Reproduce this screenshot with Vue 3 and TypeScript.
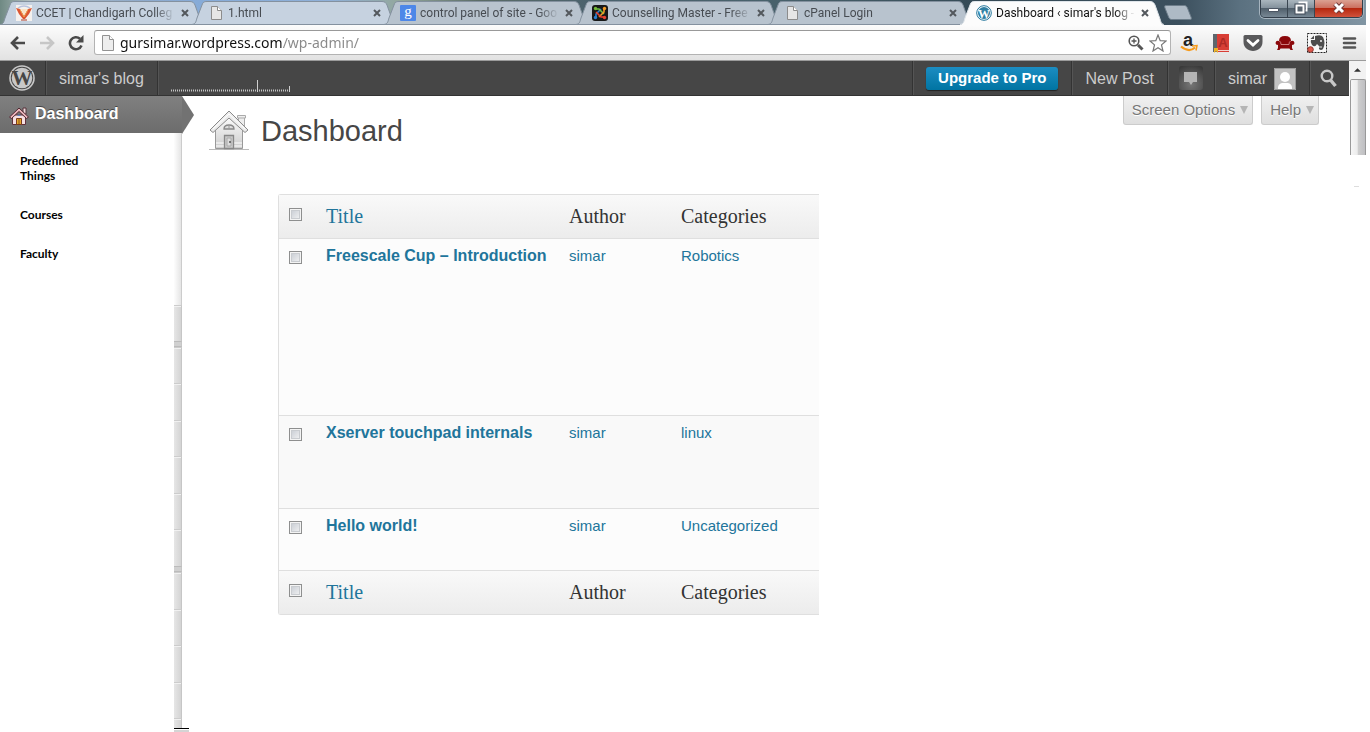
<script setup lang="ts">
import { ref } from 'vue'

interface Tab { title: string; icon: string; active?: boolean; tone?: string }
interface Post { title: string; author: string; category: string; size: string }

const tabs: Tab[] = [
  { title: 'CCET | Chandigarh Colleg', icon: 'ccet', tone: 'light' },
  { title: '1.html', icon: 'page', tone: 'light' },
  { title: 'control panel of site - Goo', icon: 'google' },
  { title: 'Counselling Master - Free', icon: 'joomla' },
  { title: 'cPanel Login', icon: 'page' },
  { title: "Dashboard ‹ simar's blog -", icon: 'wp', active: true },
]

const posts: Post[] = [
  { title: 'Freescale Cup – Introduction', author: 'simar', category: 'Robotics', size: 'tall' },
  { title: 'Xserver touchpad internals', author: 'simar', category: 'linux', size: 'medium' },
  { title: 'Hello world!', author: 'simar', category: 'Uncategorized', size: 'short' },
]

const menu: string[] = ['Predefined Things', 'Courses', 'Faculty']
const rail: string[] = ['item', 'gap', 'item', 'item', 'item', 'item', 'item', 'item', 'gap', 'item', 'item', 'item', 'item', 'rest']
const address = ref('gursimar.wordpress.com/wp-admin/')
</script>

<template>
  <div class="browser">
    <header class="strip">
      <ul class="tabs">
        <li v-for="(tab, i) in tabs" :key="i" class="tab" :class="[{ active: tab.active }, tab.tone]">
          <svg class="shape" viewBox="0 0 204 25" preserveAspectRatio="none" aria-hidden="true">
            <path class="fill" d="M0 25C4 24 4 21 5 18L10 5C11 2 12 1.500 15 1.500H190C193 1.500 194 3 195 5L200 19C201 23 202 24 204 25Z" />
            <path class="edge" d="M0 24.500C4 24 4 21 5 18L10 5C11 2 12 1.500 15 1.500H190C193 1.500 194 3 195 5L200 19C201 23 202 24 204 24.500" />
            <path v-if="!tab.active" class="edge" d="M1 24.500H203" />
          </svg>
          <svg class="favicon" viewBox="0 0 16 16" aria-hidden="true">
            <template v-if="tab.icon === 'ccet'">
              <path d="M0 0H16V16H0Z" fill="#f4f1ee" />
              <path d="M2 3Q8-1 14 3" fill="none" stroke="#b9c3de" stroke-width="1.500" />
              <path d="M0 3L4 4 8 11 12 4 16 3 13 9 9 14H7L3 9Z" fill="#dc5632" />
              <path d="M5 4H11L8 10Z" fill="#fbe3c4" />
              <path d="M4 4.500L8 12L12 4.500" fill="none" stroke="#f0a04a" />
              <path d="M5 15H11" stroke="#a33b2d" />
            </template>
            <template v-else-if="tab.icon === 'page'">
              <path d="M3.500 1.500H9.500L13.500 5.500V14.500H3.500Z" fill="#e6e6e6" stroke="#8c8c8c" />
              <path d="M9.500 1.500V5.500H13.500" fill="#fff" stroke="#8c8c8c" />
            </template>
            <template v-else-if="tab.icon === 'google'">
              <rect width="16" height="16" rx="1" fill="#4d87e8" />
              <text x="8" y="11" text-anchor="middle" class="g-mark">g</text>
            </template>
            <template v-else-if="tab.icon === 'joomla'">
              <rect width="16" height="16" rx="3" fill="#181818" />
              <path d="M4 12V9L9 4" stroke="#2c7fd0" stroke-width="1.600" fill="none" />
              <path d="M4 4H7L12 9" stroke="#6fbf44" stroke-width="1.600" fill="none" />
              <path d="M12 4V7L7 12" stroke="#f29b26" stroke-width="1.600" fill="none" />
              <path d="M12 12H9L4 7" stroke="#e64331" stroke-width="1.600" fill="none" />
              <circle cx="3.500" cy="3.500" r="1.700" fill="#72b837" /><circle cx="12.500" cy="3.500" r="1.700" fill="#f29b26" />
              <circle cx="3.500" cy="12.500" r="1.700" fill="#2c7fd0" /><circle cx="12.500" cy="12.500" r="1.700" fill="#e64331" />
            </template>
            <template v-else>
              <circle cx="8" cy="8" r="7.300" fill="#fff" stroke="#21759b" />
              <circle cx="8" cy="8" r="6" fill="#2f7fa3" />
              <text x="8" y="12.500" text-anchor="middle" class="w-small">W</text>
            </template>
          </svg>
          <button class="tab-title" type="button">{{ tab.title }}</button>
          <button class="tab-close" type="button" aria-label="Close tab">
            <svg viewBox="0 0 8 8"><path d="M1 1L7 7M7 1L1 7" /></svg>
          </button>
        </li>
      </ul>
      <button class="new-tab" type="button" aria-label="New tab">
        <svg viewBox="0 0 32 16"><path d="M3 .5H23Q25 .5 26 3L30 13Q31 15.500 29 15.500H9Q7 15.500 6 13L2 3Q1 .5 3 .5Z" /></svg>
      </button>
      <div class="window-controls">
        <button type="button" aria-label="Minimize"><svg viewBox="0 0 16 14"><path d="M2.500 7.500H12.500V10.500H2.500Z" fill="#fff" stroke="#4b5563" /></svg></button>
        <button type="button" aria-label="Restore">
          <svg viewBox="0 0 16 14"><path d="M5.500 1.500H13.500V9.500H11" fill="none" stroke="#fff" stroke-width="2" /><path d="M3.500 4.500H10.500V11.500H3.500Z" fill="none" stroke="#3e4856" stroke-width="4" /><path d="M3.500 4.500H10.500V11.500H3.500Z" fill="#58646f" stroke="#fff" stroke-width="2" /></svg>
        </button>
        <button type="button" class="shut" aria-label="Close window">
          <svg viewBox="0 0 16 14"><path d="M4 3L12 11M12 3L4 11" stroke="#713a38" stroke-width="5" /><path d="M4 3L12 11M12 3L4 11" stroke="#fff" stroke-width="3" /></svg>
        </button>
      </div>
    </header>

    <div class="toolbar">
      <button class="tool" type="button" aria-label="Back"><svg viewBox="0 0 16 16"><path d="M15 8H3M8 2L2 8L8 14" fill="none" stroke="#4a4a4a" stroke-width="2.600" /></svg></button>
      <button class="tool" type="button" aria-label="Forward"><svg viewBox="0 0 16 16"><path d="M1 8H13M8 2L14 8L8 14" fill="none" stroke="#c6c6c6" stroke-width="2.600" /></svg></button>
      <button class="tool reload" type="button" aria-label="Reload"><svg viewBox="0 0 16 16"><path d="M13.500 10.500A6 6 0 1 1 12 3.800" fill="none" stroke="#4a4a4a" stroke-width="2.600" /><path d="M15.500 0V7.500H8Z" fill="#4a4a4a" /></svg></button>
      <div class="omnibox">
        <svg class="page-icon" viewBox="0 0 16 16" aria-hidden="true"><path d="M2.500 .5H9.500L13.500 4.500V15.500H2.500Z" fill="#eee" stroke="#929292" /><path d="M9.500 .5V4.500H13.500" fill="#fff" stroke="#929292" /></svg>
        <input v-model="address" type="text" aria-label="Address" spellcheck="false" />
        <button class="inner-tool" type="button" aria-label="Zoom"><svg viewBox="0 0 16 16"><circle cx="6" cy="6" r="4.800" fill="none" stroke="#555" stroke-width="1.600" /><path d="M3.500 6H8.500M6 3.500V8.500" stroke="#555" stroke-width="1.300" /><path d="M10 10L14.500 14.500" stroke="#555" stroke-width="3" /></svg></button>
        <button class="inner-tool star" type="button" aria-label="Bookmark"><svg viewBox="0 0 18 18"><path d="M9 1L11.200 6.600 17 7 12.500 10.900 14 17 9 13.700 4 17 5.500 10.900 1 7 6.800 6.600Z" fill="#fff" stroke="#777" stroke-width="1.200" /></svg></button>
      </div>
      <div class="extensions">
        <button type="button" aria-label="Amazon"><svg viewBox="0 0 20 20"><text x="9" y="13" text-anchor="middle" class="a-mark">a</text><path d="M2 13.500Q10 20 16 14.500" fill="none" stroke="#f79b1c" stroke-width="2.200" /><path d="M13 13L18 12.500L17 17.500" fill="none" stroke="#f79b1c" stroke-width="1.500" /></svg></button>
        <button type="button" aria-label="Dictionary"><svg viewBox="0 0 20 20"><path d="M2 1H18V19H2Z" fill="#d83e36" /><path d="M2 1H6V19H2Z" fill="#5d666c" /><path d="M6 17.500H18" stroke="#f3d6d2" /><path d="M3 15H7V20L5 18L3 20Z" fill="#efb326" /><text x="12" y="14" text-anchor="middle" class="d-mark">A</text></svg></button>
        <button type="button" aria-label="Pocket"><svg viewBox="0 0 20 20"><path d="M2 2H18Q19.500 2 19.500 3.500V9C19.500 14.500 15 18 10 18S.5 14.500 .5 9V3.500Q.5 2 2 2Z" fill="#59595b" /><path d="M5 7.500L10 12L15 7.500" fill="none" stroke="#fff" stroke-width="2.800" stroke-linecap="round" /></svg></button>
        <button type="button" aria-label="Sofa"><svg viewBox="0 0 20 20"><path d="M4 8Q4 3 10 3T16 8Q19 7 19.500 10Q19.500 12 17 12V15L18 17H15.500L14.500 15.500H5.500L4.500 17H2L3 15V12Q.5 12 .5 10Q1 7 4 8Z" fill="#8b080b" /><path d="M4.500 8Q6 9 6 11.500H14Q14 9 15.500 8" fill="none" stroke="#d99" stroke-width=".8" /></svg></button>
        <button type="button" aria-label="Evernote clipper"><svg viewBox="0 0 20 20"><path d="M.5 .5H19.500V19.500H.5Z" fill="#f8f8f8" stroke="#222" stroke-dasharray="2 1" /><path d="M4 7H8V3Q14 1 16 4Q19 10 16 16Q14 18 12 16V13L10 11Q8 15 5 12Q3 9 4 7Z" fill="#4d4d4d" /><path d="M3.500 6L7 2.500V6Z" fill="#4d4d4d" /><circle cx="14" cy="8" r="1" fill="#eee" /><path d="M12 14H15" stroke="#eee" /><circle cx="3.500" cy="16.500" r="2.800" fill="#e0574b" stroke="#8d3932" /></svg></button>
        <button type="button" aria-label="Menu"><svg viewBox="0 0 20 20"><path d="M5 5.500H16M5 10H16M5 14.500H16" stroke="#555" stroke-width="2.600" stroke-linecap="round" /></svg></button>
      </div>
    </div>

    <div class="viewport">
      <div class="page">
        <nav class="adminbar">
          <a href="#" class="bar-item logo" aria-label="WordPress">
            <svg viewBox="0 0 26 26"><circle cx="13" cy="13" r="12" fill="none" stroke="#c8c8c8" stroke-width="1.600" /><circle cx="13" cy="13" r="10.300" fill="#c8c8c8" /><text x="13" y="20" text-anchor="middle" class="w-large">W</text></svg>
          </a>
          <a href="#" class="bar-item">simar's blog</a>
          <a href="#" class="stats" aria-label="Site stats">
            <svg viewBox="0 0 120 12"><path d="M0 10.500H120" stroke="#c4c4c4" stroke-width="2" stroke-dasharray="1 1" /><path d="M86.500 0V12M118.500 6V12" stroke="#d0d0d0" /></svg>
          </a>
          <div class="bar-item upgrade-box"><a href="#" class="upgrade">Upgrade to Pro</a></div>
          <a href="#" class="bar-item">New Post</a>
          <a href="#" class="bar-item notes" aria-label="Notifications">
            <svg viewBox="0 0 24 24"><path d="M5 6H18V16H14L12 19L10 16H5Z" fill="#b5b5b5" /></svg>
          </a>
          <a href="#" class="bar-item user">simar
            <svg viewBox="0 0 22 22" aria-hidden="true"><path d="M0 0H22V22H0Z" fill="#c3c3c3" /><path d="M.5 .5H21.500V21.500H.5Z" fill="none" stroke="#9b9b9b" /><circle cx="11" cy="9" r="5" fill="#fff" /><path d="M4 21Q3.500 16 8 15H14Q18.500 16 18 21Z" fill="#fff" /></svg>
          </a>
          <button class="bar-item search" type="button" aria-label="Search">
            <svg viewBox="0 0 18 20"><circle cx="7" cy="8" r="5.300" fill="none" stroke="#c8c8c8" stroke-width="2.400" /><path d="M10.500 12L15.500 18" stroke="#c8c8c8" stroke-width="3.500" /></svg>
          </button>
        </nav>

        <div class="body">
          <aside class="sidebar">
            <a href="#" class="current">
              <svg class="small-house" viewBox="0 0 20 20" aria-hidden="true"><path d="M14 2H17V8H14Z" fill="#ead9da" stroke="#59333a" /><path d="M3.500 9H16.500V18.500H3.500Z" fill="#f6dfe2" stroke="#61323c" /><path d="M10 2L.5 11L2.500 12.500L10 5.500L17.500 12.500L19.500 11Z" fill="#e8b2b8" stroke="#4f2730" /><path d="M7.500 12.500H12.500V18.500H7.500Z" fill="#e5a82b" stroke="#7a3c1f" /><path d="M10 12.500V18" stroke="#8c531d" /><path d="M8 10Q10 7 12 10Z" fill="#5c82c2" /></svg>
              <span>Dashboard</span>
              <svg class="pointer" viewBox="0 0 12 38" aria-hidden="true"><path d="M0 0L12 19L0 38Z" fill="#727272" /></svg>
            </a>
            <div class="side-columns">
              <ul class="side-menu">
                <li v-for="item in menu" :key="item"><a href="#">{{ item }}</a></li>
              </ul>
              <div class="rail" aria-hidden="true">
                <div class="rail-top"></div>
                <div v-for="(part, i) in rail" :key="i" class="rail-part" :class="part"></div>
                <div class="rail-foot"></div>
              </div>
            </div>
          </aside>

          <main>
            <div class="heading">
              <svg class="house" viewBox="0 0 40 42" aria-hidden="true">
                <defs><linearGradient id="wall" x1="0" y1="0" x2="0" y2="1"><stop offset="0" stop-color="#fff" /><stop offset="1" stop-color="#ccc" /></linearGradient></defs>
                <path d="M29.500 6.500H35.500V18H29.500Z" fill="#eee" stroke="#aaa" /><path d="M28.500 5.500H36.500V8H28.500Z" fill="#eee" stroke="#aaa" />
                <path d="M0 39H40V40H0Z" fill="#bbb" /><path d="M6.500 18L20 5L33.500 18V38.500H6.500Z" fill="url(#wall)" stroke="#999" />
                <path d="M20 1L1 20L4 22.500L20 8L36 22.500L39 20Z" fill="#ececec" stroke="#8a8a8a" /><path d="M4 19L20 4L36 19" fill="none" stroke="#fff" />
                <path d="M15 19Q15 15 20 15T25 19Z" fill="#ddd" stroke="#888" stroke-width="1.300" /><path d="M20 15V19" stroke="#999" />
                <path d="M7 33H33M7 36H33" stroke="#fff" /><path d="M15.500 25.500H24.500V38.500H15.500Z" fill="#c9c9c9" stroke="#888" stroke-width="1.300" /><path d="M18 28H22V36H18Z" fill="#ddd" stroke="#aaa" /><circle cx="21" cy="32" r="1" fill="#555" />
              </svg>
              <h1>Dashboard</h1>
              <div class="meta">
                <button type="button">Screen Options<i></i></button>
                <button type="button">Help<i></i></button>
              </div>
            </div>

            <table>
              <thead>
                <tr>
                  <th class="check"><input type="checkbox" aria-label="Select all" /></th>
                  <th class="title"><a href="#">Title</a></th>
                  <th class="author">Author</th>
                  <th class="category">Categories</th>
                </tr>
              </thead>
              <tbody>
                <tr v-for="post in posts" :key="post.title" :class="post.size">
                  <td class="check"><input type="checkbox" :aria-label="post.title" /></td>
                  <td class="title"><a href="#">{{ post.title }}</a></td>
                  <td><a href="#">{{ post.author }}</a></td>
                  <td><a href="#">{{ post.category }}</a></td>
                </tr>
              </tbody>
              <tfoot>
                <tr>
                  <th class="check"><input type="checkbox" aria-label="Select all" /></th>
                  <th class="title"><a href="#">Title</a></th>
                  <th>Author</th>
                  <th>Categories</th>
                </tr>
              </tfoot>
            </table>
          </main>
        </div>
      </div>
      <div class="scrollbar" aria-hidden="true">
        <div class="scroll-up"><svg viewBox="0 0 8 4"><path d="M4 0L8 4H0Z" fill="#333" /></svg></div>
        <div class="thumb"></div>
        <div class="stub"></div>
      </div>
    </div>
  </div>
</template>

<style>
html, body { margin: 0; background: #fff; }
</style>

<style scoped>
* { box-sizing: border-box; }
button { font: inherit; border: 0; padding: 0; margin: 0; background: none; color: inherit; }
a { text-decoration: none; color: inherit; }
ul { list-style: none; margin: 0; padding: 0; }
svg { display: block; flex: none; }

.browser { min-height: 100vh; padding-right: 4px; display: flex; flex-direction: column; font-family: "Liberation Sans", Arial, sans-serif; background: #fff; }

.strip { display: flex; height: 25px; background: linear-gradient(90deg, #6f8983 0, #b3bfc0 30px, #8faacb 140px, #86abd8 200px, #8fb0d8 330px, #93a79c 400px, #5a6b66 480px, #4b626d 590px, #48616b 780px, #334854 1000px, #3c505e 1180px, #5b7180 1240px, #8195a3 100%); }
.tabs { display: flex; flex: 0 1 1152px; min-width: 0; }
.tab { position: relative; isolation: isolate; display: flex; align-items: center; flex: 1 1 192px; min-width: 0; height: 25px; padding-left: 16px; z-index: 1; }
.tab.active { z-index: 2; }
.shape { position: absolute; left: 0; top: 0; width: calc(100% + 12px); height: 25px; z-index: -1; }
.fill { fill: #b8c3ce; }
.light .fill { fill: #c6d2e0; }
.active .fill { fill: #fcfcfc; }
.edge { fill: none; stroke: #84919f; stroke-width: 1; }
.active .edge { stroke: #dfe5ea; }
.favicon { width: 16px; height: 16px; }
.g-mark { font: 15px "Liberation Serif", serif; fill: #fff; }
.w-small { font: bold 12px "Liberation Serif", serif; fill: #fff; }
.tab-title { flex: 1; min-width: 0; margin-left: 4px; overflow: hidden; white-space: nowrap; text-align: left; font: 12px/18px Roboto, "Open Sans", sans-serif; color: #474c52; -webkit-mask-image: linear-gradient(90deg, #000 calc(100% - 20px), transparent); mask-image: linear-gradient(90deg, #000 calc(100% - 20px), transparent); }
.active .tab-title { color: #111; }
.tab-close { width: 8px; height: 8px; margin: 0 3px 0 6px; }
.tab-close svg { width: 8px; height: 8px; }
.tab-close path { stroke: #53585d; stroke-width: 2; }
.new-tab { margin: 5px 0 0 10px; width: 32px; height: 15px; }
.new-tab svg { width: 32px; height: 15px; }
.new-tab path { fill: #aebac5; stroke: #6d7d8a; }
.window-controls { display: flex; margin-left: auto; margin-right: 3px; height: 18px; border: 1px solid #333f4b; border-top: 0; border-radius: 0 0 5px 5px; overflow: hidden; box-shadow: 0 0 0 1px #a6b4bf; }
.window-controls button { display: grid; place-items: center; width: 27px; background: linear-gradient(#aab6be, #82909b 48%, #505f6b 50%, #788895); border-right: 1px solid #3a4651; }
.window-controls svg { width: 16px; height: 14px; margin-bottom: 2px; }
.window-controls .shut { width: 47px; border-right: 0; background: linear-gradient(#dba192, #cc7160 45%, #b6280f 50%, #d0523c); }

.toolbar { display: flex; align-items: center; height: 36px; padding: 0 7px 0 10px; background: linear-gradient(#fcfcfc, #e2e2e2); border-bottom: 1px solid #9b9b9b; }
.tool { width: 16px; height: 16px; margin-right: 13px; }
.tool.reload { margin-right: 10px; }
.tool svg { width: 16px; height: 16px; }
.omnibox { flex: 1; min-width: 0; display: flex; align-items: center; height: 25px; padding: 0 3px 0 5px; background: #fff; border: 1px solid #b3b3b3; border-top-color: #999; border-radius: 3px; }
.page-icon { width: 16px; height: 16px; }
.omnibox input { flex: 1; min-width: 0; height: 22px; margin-left: 4px; border: 0; padding: 0; outline: 0; font: 14px/22px "Noto Sans", "Open Sans", sans-serif; color: transparent; background: linear-gradient(90deg, #111 162px, #888 162px); -webkit-background-clip: text; background-clip: text; }
.inner-tool { margin-left: 6px; }
.inner-tool svg { width: 16px; height: 16px; }
.inner-tool.star svg { width: 18px; height: 18px; }
.inner-tool.star { margin-left: 5px; }
.extensions { display: flex; gap: 12px; margin-left: 8px; }
.extensions svg { width: 20px; height: 20px; }
.a-mark { font: bold 18px "Liberation Sans", sans-serif; fill: #222; }
.d-mark { font: bold 13px "Liberation Sans", sans-serif; fill: #ad2a25; }

.viewport { display: flex; flex: 1; }
.page { flex: 1; min-width: 0; display: flex; flex-direction: column; }
.adminbar { display: flex; height: 35px; background: #464646; border-bottom: 1px solid #333; color: #ccc; font-size: 16px; line-height: 20px; }
.bar-item { display: flex; align-items: center; padding: 1px 13px 0; border-right: 1px solid #333; box-shadow: 1px 0 0 #555; }
.logo { padding: 0 10px 0 9px; }
.logo svg { width: 26px; height: 26px; }
.w-large { font: bold 21px "Liberation Serif", serif; fill: #464646; }
.stats { display: flex; align-items: flex-end; flex: 1; padding: 0 13px 3px; border-right: 1px solid #333; box-shadow: 1px 0 0 #555; }
.stats svg { width: 120px; height: 12px; }
.upgrade { padding: 1px 12px 2px; border-radius: 3px; font-size: 15px; font-weight: bold; color: #fff; background: linear-gradient(#1c8dc2, #0074a2); box-shadow: 0 1px 1px #222; }
.notes { padding: 0 11px; }
.notes svg { width: 24px; height: 24px; border-radius: 3px; background: radial-gradient(circle at 50% 75%, #777, #505050 60%, #333); }
.user { gap: 7px; }
.user svg { width: 22px; height: 22px; }
.search { border-right: 0; box-shadow: none; padding: 0 11px 0 10px; }
.search svg { width: 18px; height: 20px; }

.body { display: flex; flex: 1; }
.sidebar { width: 182px; flex: none; display: flex; flex-direction: column; }
.current { position: relative; display: flex; align-items: center; gap: 6px; height: 37px; padding: 0 9px 2px; background: linear-gradient(#808080, #6c6c6c); color: #fff; font-size: 16px; font-weight: bold; text-shadow: 0 -1px 0 #444; }
.small-house { width: 20px; height: 20px; margin-top: 4px; }
.pointer { position: absolute; left: 100%; top: 0; width: 12px; height: 38px; }
.side-columns { display: flex; flex: 1; }
.side-menu { flex: 1; display: flex; flex-direction: column; gap: 24px; padding: 20px 80px 0 20px; font: bold 12px/15px Lato, "Open Sans", sans-serif; color: #000; }
.rail { width: 8px; display: flex; flex-direction: column; }
.rail-top { height: 172px; border-right: 1px solid #ccc; background: linear-gradient(90deg, #fdfdfd, #e5e5e5); }
.rail-part { height: 37px; border-top: 1px solid #ccc; border-right: 1px solid #c6c6c6; background: linear-gradient(90deg, #e6e6e6, #d4d4d4); box-shadow: inset 0 1px 0 #f1f1f1; }
.rail-part:nth-child(even) { height: 36px; }
.rail-part.gap { height: 6px; background: #d0d0d0; border-top-color: #bbb; box-shadow: none; border-bottom: 1px solid #bbb; }
.rail-part.rest { flex: 1; height: auto; min-height: 9px; }
.rail-foot { width: 15px; height: 4px; border-top: 1px solid #000; border-bottom: 2px solid #d4d4d4; }

main { flex: 1; min-width: 0; padding-right: 30px; }
.heading { display: flex; align-items: flex-start; padding-left: 27px; }
.house { width: 40px; height: 42px; margin-top: 14px; }
h1 { margin: 17px 0 0 12px; font-size: 29px; line-height: 36px; font-weight: normal; color: #464646; }
.meta { display: flex; gap: 8px; margin-left: auto; }
.meta button { display: flex; align-items: center; gap: 5px; height: 29px; padding: 0 4px 1px 8px; font-size: 15px; color: #777; background: linear-gradient(#f0f0f0, #dfdfdf); border: 1px solid #ccc; border-top: 0; border-radius: 0 0 3px 3px; text-shadow: 0 1px 0 #fff; }
.meta i { border: 4px solid transparent; border-top: 8px solid #b5b5b5; border-bottom: 0; }

table { margin: 42px 0 0 96px; width: 541px; border-collapse: separate; border-spacing: 0; border: 1px solid #dfdfdf; border-right: 0; border-radius: 3px 0 0 3px; table-layout: fixed; font-size: 15px; line-height: 18px; color: #21759b; }
th { height: 43px; padding: 0 8px 2px; text-align: left; font: 20px/24px "Liberation Serif", serif; color: #333; background: linear-gradient(#f9f9f9, #ececec); }
th a { color: #21759b; }
thead th { height: 44px; border-bottom: 1px solid #dfdfdf; }
td { padding: 8px; vertical-align: top; border-bottom: 1px solid #dfdfdf; background: #fcfcfc; }
.medium td { background: #f9f9f9; }
.tall td { height: 177px; }
.medium td { height: 93px; }
.short td { height: 62px; }
.check { width: 39px; padding: 0 0 2px 10px; }
td.check { padding-top: 12px; }
.title { width: 243px; }
td.title { font-size: 16px; font-weight: bold; }
.author { width: 112px; }
input[type="checkbox"] { appearance: none; display: block; width: 13px; height: 13px; margin: 0; border: 1px solid #8e8f8f; background: linear-gradient(135deg, #c3c8d0, #f6f6f6); box-shadow: inset 0 0 0 1px #f4f4f4, inset 0 0 0 2px #c9ccd0; }
input[type="checkbox"]:checked { background: #21759b; }
th input[type="checkbox"] { margin-bottom: 2px; }

.scrollbar { width: 17px; display: flex; flex-direction: column; }
.scroll-up { display: grid; place-items: center; height: 18px; background: #f2f2f2; }
.scroll-up svg { width: 7px; height: 4px; }
.thumb { height: 76px; margin-left: 1px; border: 1px solid #999; border-bottom: 0; border-radius: 2px 2px 0 0; background: linear-gradient(90deg, #f6f6f6 0, #ececec 45%, #cfcfcf 50%, #bfbfc2 100%); }
.stub { width: 5px; height: 1px; margin: 31px 0 0 5px; background: #ddd; }
</style>
